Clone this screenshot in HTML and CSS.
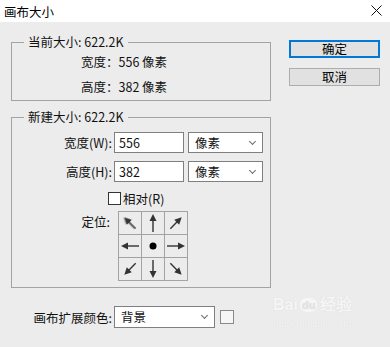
FILE: index.html
```html
<!DOCTYPE html>
<html lang="zh-CN">
<head>
  <meta charset="UTF-8" />
  <title>画布大小</title>
  <link rel="stylesheet" href="styles.css">
</head>
<body>
  <div class="dialog">
    <div class="titlebar">
      <span class="title">画布大小</span>
      <svg class="close" width="11" height="11" viewBox="0 0 11 11">
        <path d="M0.5 0.5 L10.5 10.5 M10.5 0.5 L0.5 10.5" stroke="#111" stroke-width="1" fill="none"/>
      </svg>
    </div>

    <div class="dialog-body">
      <div class="main">
        <fieldset class="group current">
          <legend>当前大小: 622.2K</legend>
          <div class="info-row">宽度：556 像素</div>
          <div class="info-row">高度：382 像素</div>
        </fieldset>

        <fieldset class="group new-size">
          <legend>新建大小: 622.2K</legend>
          <div class="field-row">
            <label class="field-label">宽度(W):</label>
            <div class="text-input">556</div>
            <div class="select unit">像素<span class="chevron"></span></div>
          </div>
          <div class="field-row">
            <label class="field-label">高度(H):</label>
            <div class="text-input">382</div>
            <div class="select unit">像素<span class="chevron"></span></div>
          </div>
          <div class="check-row">
            <span class="checkbox"></span>相对(R)
          </div>
          <div class="anchor-row">
            <label class="field-label">定位:</label>
            <div class="anchor-grid">
              <div class="cell"><svg viewBox="0 0 22 22"><g transform="rotate(-45 11 11)" class="arrow blur"><polygon points="11,3 7.5,10 14.5,10"/><line x1="11" y1="9" x2="11" y2="19"/></g></svg></div>
              <div class="cell"><svg viewBox="0 0 22 22"><g class="arrow"><polygon points="11,2 7.5,9 14.5,9"/><line x1="11" y1="8" x2="11" y2="20"/></g></svg></div>
              <div class="cell"><svg viewBox="0 0 22 22"><g transform="rotate(45 11 11)" class="arrow"><polygon points="11,3 7.5,10 14.5,10"/><line x1="11" y1="9" x2="11" y2="19"/></g></svg></div>
              <div class="cell"><svg viewBox="0 0 22 22"><g transform="rotate(-90 11 11)" class="arrow"><polygon points="11,2 7.5,9 14.5,9"/><line x1="11" y1="8" x2="11" y2="20"/></g></svg></div>
              <div class="cell"><svg viewBox="0 0 22 22"><circle cx="11" cy="11" r="3.5" fill="#000"/></svg></div>
              <div class="cell"><svg viewBox="0 0 22 22"><g transform="rotate(90 11 11)" class="arrow"><polygon points="11,2 7.5,9 14.5,9"/><line x1="11" y1="8" x2="11" y2="20"/></g></svg></div>
              <div class="cell"><svg viewBox="0 0 22 22"><g transform="rotate(-135 11 11)" class="arrow"><polygon points="11,3 7.5,10 14.5,10"/><line x1="11" y1="9" x2="11" y2="19"/></g></svg></div>
              <div class="cell"><svg viewBox="0 0 22 22"><g transform="rotate(180 11 11)" class="arrow"><polygon points="11,2 7.5,9 14.5,9"/><line x1="11" y1="8" x2="11" y2="20"/></g></svg></div>
              <div class="cell"><svg viewBox="0 0 22 22"><g transform="rotate(135 11 11)" class="arrow"><polygon points="11,3 7.5,10 14.5,10"/><line x1="11" y1="9" x2="11" y2="19"/></g></svg></div>
            </div>
          </div>
        </fieldset>

        <div class="extend-row">
          <label class="extend-label">画布扩展颜色:</label>
          <div class="select extend">背景<span class="chevron"></span></div>
          <span class="swatch"></span>
        </div>
      </div>

      <div class="actions">
        <button class="btn default">确定</button>
        <button class="btn">取消</button>
      </div>
    </div>

    <div class="watermark">
      <div class="wm-logo">Bai<span class="wm-paw">du</span>经验</div>
      <div class="wm-url">jingyan.baidu.com</div>
    </div>
  </div>
</body>
</html>
```

FILE: styles.css
```css
* {
  box-sizing: border-box;
}

html, body {
  margin: 0;
  padding: 0;
  width: 390px;
  height: 347px;
  overflow: hidden;
  background: #ececec;
  font-family: "Noto Sans CJK SC", "Liberation Sans", sans-serif;
  font-size: 12px;
  color: #111;
}

.dialog {
  position: relative;
  width: 390px;
  height: 347px;
}

.titlebar {
  height: 22px;
  background: #fff;
  display: flex;
  align-items: center;
  justify-content: space-between;
  padding: 0 8px 0 4px;
  font-size: 12.5px;
  color: #000;
}

.close {
  margin-top: -1px;
}

.dialog-body {
  display: flex;
  padding-left: 11px;
}

.main {
  width: 260px;
}

.group {
  margin: 0;
  padding: 0;
  border: 1px solid #a3a3a3;
  min-width: 0;
}

.group legend {
  margin-left: 12px;
  padding: 0 4px;
  line-height: 16px;
  height: 16px;
  font-size: 12.5px;
}

.current {
  margin-top: 12px;
  padding: 4px 0 5px 0;
}

.info-row {
  padding-left: 69px;
  line-height: 16px;
  height: 16px;
  font-size: 12.5px;
}

.info-row + .info-row {
  margin-top: 9px;
}

.new-size {
  margin-top: 8px;
  padding: 7px 0 6px 0;
}

.field-row {
  display: flex;
  align-items: center;
  height: 21px;
  margin-bottom: 8px;
}

.field-label {
  width: 100px;
  text-align: right;
  margin-right: 2px;
  font-size: 12.5px;
  line-height: 16px;
}

.text-input {
  width: 70px;
  height: 21px;
  border: 1px solid #7f7f7f;
  background: #fff;
  padding: 0 4px;
  line-height: 19px;
  font-size: 12.5px;
}

.select {
  position: relative;
  height: 21px;
  border: 1px solid #7f7f7f;
  background: #fff;
  padding: 0 6px;
  line-height: 19px;
  font-size: 12.5px;
}

.unit {
  width: 75px;
  margin-left: 4px;
  margin-top: -1px;
}

.chevron {
  position: absolute;
  right: 7px;
  top: 6px;
  width: 5px;
  height: 5px;
  border-right: 1px solid #6a6a6a;
  border-bottom: 1px solid #6a6a6a;
  transform: rotate(45deg);
}

.check-row {
  display: flex;
  align-items: center;
  height: 16px;
  margin-top: 2px;
  padding-left: 96px;
  font-size: 12.5px;
}

.checkbox {
  width: 13px;
  height: 13px;
  border: 1px solid #333;
  background: #fff;
  margin-right: 2px;
}

.anchor-row {
  display: flex;
  align-items: flex-start;
  margin-top: 5px;
}

.anchor-row .field-label {
  width: 98px;
  margin-top: 3px;
}

.anchor-grid {
  margin-left: 6px;
  display: grid;
  grid-template-columns: repeat(3, 22px);
  grid-auto-rows: 22px;
  gap: 1px;
  padding: 1px;
  background: #a3a3a3;
  width: 70px;
}

.cell {
  background: #ececec;
}

.cell svg {
  display: block;
  width: 22px;
  height: 22px;
}

.arrow polygon {
  fill: #333;
}

.arrow line {
  stroke: #333;
  stroke-width: 1.4;
}

.arrow.blur {
  filter: drop-shadow(-1px -1px 0.6px #b5b5b5);
}

.extend-row {
  display: flex;
  align-items: center;
  margin-top: 18px;
}

.extend-label {
  width: 101px;
  text-align: right;
  margin-right: 2px;
  font-size: 12.5px;
}

.extend {
  width: 101px;
  height: 22px;
}

.swatch {
  width: 14px;
  height: 14px;
  border: 1px solid #8a8a8a;
  background: #f6f6f6;
  margin-left: 5px;
}

.actions {
  margin-left: 18px;
  padding-top: 18px;
  width: 91px;
  display: flex;
  flex-direction: column;
  gap: 10px;
}

.btn {
  height: 18px;
  padding: 0;
  border: 1px solid #adadad;
  background: #e1e1e1;
  font-family: inherit;
  font-size: 12.5px;
  line-height: 16px;
  color: #000;
}

.btn.default {
  border: 2px solid #0078d7;
  line-height: 14px;
}

.watermark {
  position: absolute;
  left: 273px;
  top: 294px;
  color: #f6f6f6;
  text-shadow: 0 0 1px #d4d4d4;
  pointer-events: none;
}

.wm-logo {
  display: flex;
  align-items: center;
  font-family: "Liberation Sans", sans-serif;
  font-weight: bold;
  font-size: 16px;
  line-height: 22px;
}

.wm-paw {
  display: inline-block;
  font-size: 11px;
  line-height: 14px;
  margin: 0 3px 0 2px;
  padding: 0 2px;
  border-radius: 7px;
  background: #f6f6f6;
  color: #e4e4e4;
}

.wm-url {
  font-family: "Liberation Serif", serif;
  font-size: 10.5px;
  line-height: 14px;
  margin-top: 1px;
}
```
